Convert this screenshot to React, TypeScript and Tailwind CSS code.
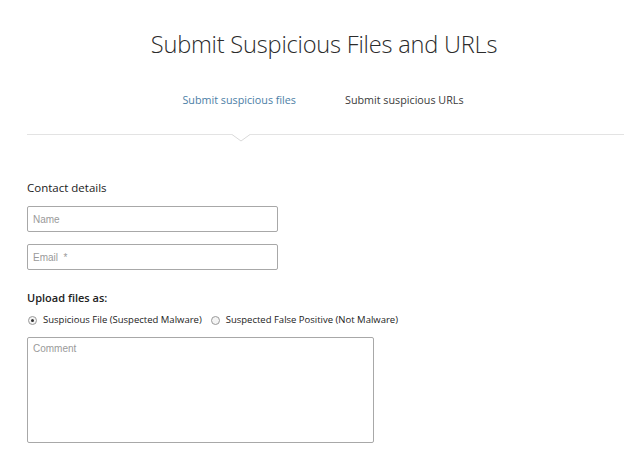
import React from 'react';

const Caret: React.FC = () => (
    <svg width="18" height="8" viewBox="0 0 18 8" className="absolute left-[205px] top-[-1px]">
        <rect x="0" y="0" width="18" height="2" fill="#ffffff" />
        <path d="M0 0.5 L9 7 L18 0.5" fill="#ffffff" stroke="#d9d9d9" strokeWidth="1" />
    </svg>
);

const Radio: React.FC<{ checked?: boolean }> = ({ checked }) => (
    <span className="flex h-[9px] w-[9px] items-center justify-center rounded-full border border-[#9a9a9a] bg-[#f4f4f4]">
        {checked && <span className="h-[3px] w-[3px] rounded-full bg-[#333]" />}
    </span>
);

export default function App() {
    return (
        <div className="min-h-[451px] w-[640px] bg-white font-['Open_Sans',sans-serif] text-[#333]">
            {/* Heading */}
            <h1 className="pt-[27px] pl-[8px] text-center text-[23.6px] font-light leading-[34px] tracking-[-0.2px] text-[#2b2b2b]">
                Submit Suspicious Files and URLs
            </h1>

            {/* Tabs */}
            <div className="mt-[31px] flex justify-center gap-[49px] pl-[6px] text-[10.75px] leading-[16px]">
                <span className="text-[#4b7ea6]">Submit suspicious files</span>
                <span className="text-[#3a3a3a]">Submit suspicious URLs</span>
            </div>

            <div className="relative mx-[27px] mt-[26px] w-[597px] border-t border-[#e3e3e3]">
                <Caret />
            </div>

            {/* Form */}
            <div className="px-[27px] pt-[45px]">
                <h2 className="text-[11.5px] leading-[16px] text-[#222]">Contact details</h2>

                <div className="mt-[10px] flex h-[26px] w-[251px] items-center rounded-[2px] border border-[#a8a8a8] px-[5px] font-['Liberation_Sans',sans-serif] text-[10px] text-[#9a9a9a]">
                    Name
                </div>
                <div className="mt-[12px] flex h-[26px] w-[251px] items-center rounded-[2px] border border-[#a8a8a8] px-[5px] font-['Liberation_Sans',sans-serif] text-[10px] text-[#9a9a9a]">
                    Email&nbsp;&nbsp;*
                </div>

                <h2 className="mt-[20px] text-[11px] font-semibold leading-[16px] text-[#222]">Upload files as:</h2>

                <div className="mt-[7px] flex items-center text-[9.5px] leading-[14px] text-[#222]">
                    <span className="ml-[1px]"><Radio checked /></span>
                    <span className="ml-[6px]">Suspicious File (Suspected Malware)</span>
                    <span className="ml-[9px]"><Radio /></span>
                    <span className="ml-[6px]">Suspected False Positive (Not Malware)</span>
                </div>

                <div className="mt-[10px] h-[106px] w-[347px] rounded-[2px] border border-[#a8a8a8] px-[5px] pt-[3px] font-['Liberation_Sans',sans-serif] text-[10px] text-[#9a9a9a]">
                    Comment
                </div>
            </div>
        </div>
    );
}
